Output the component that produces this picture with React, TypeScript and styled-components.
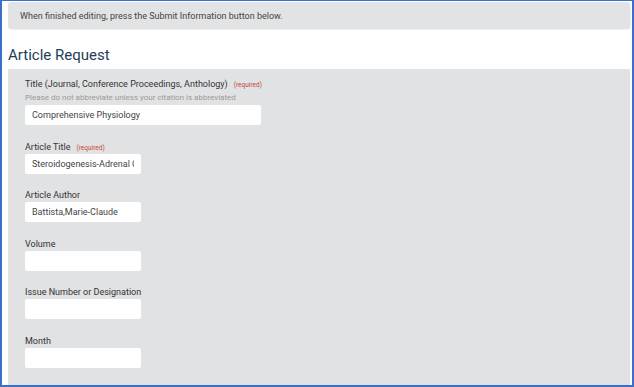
import React from 'react';
import styled, { createGlobalStyle } from 'styled-components';

const GlobalStyle = createGlobalStyle`
  html, body {
    margin: 0;
    padding: 0;
    background: #ffffff;
  }
  body {
    font-family: Roboto, "Liberation Sans", Arial, sans-serif;
    color: #333;
  }
`;

const Frame = styled.div`
  width: 634px;
  height: 387px;
  box-sizing: border-box;
  border: 2px solid #3b70c6;
  border-top-width: 1px;
  padding: 1px 2px 0 6px;
  background: #ffffff;
  overflow: hidden;
  display: flex;
  flex-direction: column;
`;

const Banner = styled.div`
  background: #e2e3e5;
  border-radius: 3px;
  box-shadow: 1px 1px 1px rgba(0, 0, 0, 0.06);
  height: 27px;
  display: flex;
  align-items: center;
  padding-left: 12px;
  font-size: 9px;
  color: #444;
  flex-shrink: 0;
`;

const Heading = styled.h2`
  margin: 0;
  box-sizing: border-box;
  height: 40px;
  padding-top: 18px;
  font-size: 15px;
  font-weight: 400;
  color: #1e3d58;
  line-height: 17px;
  flex-shrink: 0;
`;

const Panel = styled.div`
  flex: 1;
  background: #e1e2e4;
  padding: 9px 17px 0;
  display: flex;
  flex-direction: column;
`;

const Field = styled.div`
  display: flex;
  flex-direction: column;
  margin-bottom: 15.5px;
  flex-shrink: 0;
`;

const Label = styled.label`
  height: 13px;
  font-size: 9px;
  line-height: 13px;
  color: #333;
  display: flex;
  align-items: baseline;
  gap: 6px;
  white-space: nowrap;
`;

const Required = styled.span`
  font-size: 6.5px;
  line-height: 1;
  color: #c9453b;
`;

const Hint = styled.div`
  font-size: 8px;
  line-height: 12px;
  color: #9a9a9a;
  margin: 1px 0 1px;
`;

const Input = styled.input<{ $wide?: boolean }>`
  box-sizing: border-box;
  width: ${({ $wide }) => ($wide ? '236px' : '116px')};
  height: 20px;
  border: none;
  border-radius: 2px;
  background: #ffffff;
  padding: 0 7px;
  font-family: Roboto, "Liberation Sans", Arial, sans-serif;
  font-size: 9px;
  color: #444;
  outline: none;
`;

type FieldDef = {
  label: string;
  required?: boolean;
  hint?: string;
  value?: string;
  wide?: boolean;
};

const fields: FieldDef[] = [
  {
    label: 'Title (Journal, Conference Proceedings, Anthology)',
    required: true,
    hint: 'Please do not abbreviate unless your citation is abbreviated',
    value: 'Comprehensive Physiology',
    wide: true,
  },
  { label: 'Article Title', required: true, value: 'Steroidogenesis-Adrenal Cell Signal Transduction' },
  { label: 'Article Author', value: 'Battista,Marie-Claude' },
  { label: 'Volume' },
  { label: 'Issue Number or Designation' },
  { label: 'Month' },
  { label: 'Year' },
];

export default function App() {
  return (
    <>
      <GlobalStyle />
      <Frame>
        <Banner>When finished editing, press the Submit Information button below.</Banner>
        <Heading>Article Request</Heading>
        <Panel>
          {fields.map((f) => (
            <Field key={f.label}>
              <Label>
                {f.label}
                {f.required && <Required>(required)</Required>}
              </Label>
              {f.hint && <Hint>{f.hint}</Hint>}
              <Input $wide={f.wide} defaultValue={f.value ?? ''} readOnly />
            </Field>
          ))}
        </Panel>
      </Frame>
    </>
  );
}
